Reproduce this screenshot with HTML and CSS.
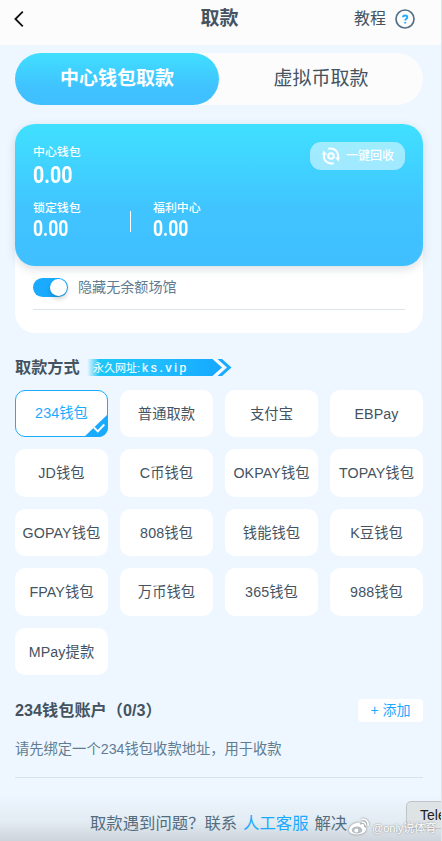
FILE: index.html
```html
<!DOCTYPE html>
<html lang="zh-CN">
<head>
<meta charset="utf-8">
<title>取款</title>
<link rel="stylesheet" href="styles.css">
</head>
<body>
<div class="page">
  <header class="topbar">
    <svg class="back" viewBox="0 0 10 18"><path d="M8.8 1.600 1.400 9l7.400 7.400"/></svg>
    <h1>取款</h1>
    <div class="help"><span>教程</span>
      <svg viewBox="0 0 20 20"><circle cx="10" cy="10" r="9"/><path d="M8 8.300c0-2.500 4.300-2.400 4.300-.1 0 1.500-2.100 1.500-2.100 3.200M10.200 13v1.500"/></svg>
    </div>
  </header>
  <main>
    <nav class="tabs"><span class="tab active">中心钱包取款</span><span class="tab">虚拟币取款</span></nav>
    <section class="wallet">
      <div class="balance">
        <div class="label">中心钱包</div>
        <div class="amount">0.00</div>
        <div class="sub">
          <div class="cell"><div class="label">锁定钱包</div><div class="amount small">0.00</div></div>
          <i class="bar"></i>
          <div class="cell"><div class="label">福利中心</div><div class="amount small">0.00</div></div>
        </div>
        <div class="recycle">
          <svg viewBox="0 0 18 18"><circle cx="9" cy="9" r="2.800"/><path d="M6.200 1.900A7.400 7.400 0 0 1 15.800 11M11.800 16.100A7.400 7.400 0 0 1 2.200 7"/><path class="solid" d="m12.900 10.600 4.900-.4-1.200 4.400ZM5.100 7.400l-4.900.4 1.200-4.400Z"/></svg>
          <span>一键回收</span>
        </div>
      </div>
      <div class="hide"><i class="switch"></i><span>隐藏无余额场馆</span></div>
    </section>
    <div class="method">
      <h2>取款方式</h2>
      <div class="ribbon">
        <svg viewBox="0 0 145 17"><defs><linearGradient id="rg"><stop offset="0" stop-color="#1cc7f7" stop-opacity="0"/><stop offset=".09" stop-color="#1cc7f7"/><stop offset=".5" stop-color="#20bdff"/><stop offset="1" stop-color="#16a8ff"/></linearGradient></defs><path fill="url(#rg)" d="M0 0h125.500l9.500 8.500-9.500 8.500H0Z"/><path fill="#18aaff" d="M130.500 0h4.500l9.500 8.500L135 17h-4.500l9.500-8.500Z"/><path class="edge" d="m127 0 9.500 8.500-9.500 8.500"/></svg>
        <span class="site">永久网址:</span><span class="host">ks.vip</span>
      </div>
    </div>
    <div class="grid">
      <div class="tile selected">234钱包<svg viewBox="0 0 24 23"><path class="corner" d="M24 0v13c0 6-4 10-10 10H0Z"/><path class="tick" d="m10 13.500 3.800 3.800 6.500-6.800"/></svg></div>
      <div class="tile">普通取款</div><div class="tile">支付宝</div><div class="tile">EBPay</div>
      <div class="tile">JD钱包</div><div class="tile">C币钱包</div><div class="tile">OKPAY钱包</div><div class="tile">TOPAY钱包</div>
      <div class="tile">GOPAY钱包</div><div class="tile">808钱包</div><div class="tile">钱能钱包</div><div class="tile">K豆钱包</div>
      <div class="tile">FPAY钱包</div><div class="tile">万币钱包</div><div class="tile">365钱包</div><div class="tile">988钱包</div>
      <div class="tile">MPay提款</div>
    </div>
    <div class="account"><h2>234钱包账户（0/3）</h2><span class="add">+ 添加</span></div>
    <p class="hint">请先绑定一个234钱包收款地址，用于收款</p>
  </main>
  <footer><span>取款遇到问题？联系</span><b>人工客服</b><span>解决</span></footer>
  <div class="tele">Tele</div>
  <div class="mark">
    <svg viewBox="0 0 20 18"><path d="M7.500 5C4 5 0 9 0 12c0 6 15 6 17 0 .7-2-1-3-2-3.200.8-3-1-3.500-4-2.300C11.300 4.500 9.500 4.200 7.500 5Z"/><ellipse class="eye" cx="8" cy="12" rx="5.300" ry="3.600"/><circle cx="7.300" cy="12.400" r="2"/><path class="wave" d="M13 4.300c2-.5 4 1 3.500 3.200M12.600 1.500c4-1 7.500 2.500 6.300 6.500"/></svg>
    <span>@only说体育</span>
  </div>
</div>
</body>
</html>
```
FILE: styles.css
```css
* { box-sizing: border-box; }
body {
  margin: 0;
  font-family: "Liberation Sans", "Noto Sans CJK SC", sans-serif;
  color: #44535f;
}
h1, h2, p { margin: 0; }
.page {
  position: relative;
  width: 442px;
  height: 841px;
  overflow: hidden;
  background: #eef7ff;
  border-right: 1px solid #dfe5ea;
}
.topbar {
  height: 45px;
  padding: 0 26px 7px 14px;
  display: grid;
  grid-template-columns: 1fr auto 1fr;
  align-items: center;
  background: #fcfcfc;
}
.back { width: 10px; height: 18px; fill: none; stroke: #111; stroke-width: 1.8; }
.topbar h1 { font-size: 19px; line-height: 28px; position: relative; left: 5px; }
.help { display: flex; justify-content: flex-end; align-items: center; gap: 9px; font-size: 16px; line-height: 24px; }
.help svg { width: 20px; height: 20px; fill: none; stroke: #557086; stroke-width: 1.7; }
.help path { stroke: #1aaeff; stroke-width: 1.9; }
.help span { margin-top: -1px; }
main { padding: 8px 18px 0 15px; }
.tabs {
  display: flex;
  height: 52px;
  border-radius: 26px;
  background: #fcfcfc;
}
.tab { flex: 1; border-radius: 26px; text-align: center; font-size: 19px; line-height: 52px; }
.tab.active { color: #fff; font-weight: 700; background: linear-gradient(#40dfff, #40c3ff 65%, #40bfff); }
.wallet {
  margin-top: 19px;
  height: 209px;
  border-radius: 20px;
  background: #fff;
}
.balance {
  position: relative;
  height: 142px;
  padding: 19px 18px 0;
  border-radius: 20px;
  color: #fff;
  background: linear-gradient(#40e0ff, #40c4ff 60%, #40bfff);
  box-shadow: 0 3px 10px rgba(70, 90, 110, .2);
}
.label { font-size: 11.900px; line-height: 19px; font-weight: 500; }
.amount {
  font-family: Roboto, sans-serif;
  font-weight: 700;
  font-size: 24.500px;
  line-height: 25px;
  padding-bottom: 2px;
  transform: scaleX(.8);
  transform-origin: left;
}
.amount.small { font-size: 22px; line-height: 22px; }
.sub { display: flex; margin-top: 10px; }
.sub .cell { width: 97px; }
.bar { width: 1px; height: 21px; margin: 12px 22px 0 0; background: #fff; }
.sub .bar + .cell { width: auto; }
.recycle {
  position: absolute;
  right: 18px;
  top: 18px;
  width: 95px;
  height: 28px;
  border-radius: 11px;
  display: flex;
  align-items: center;
  gap: 6px;
  padding-left: 12px;
  font-size: 12px;
  line-height: 28px;
  font-weight: 500;
  background: rgba(255, 255, 255, .5);
}
.recycle span { height: 28px; }
.recycle svg { width: 18px; height: 18px; fill: none; stroke: #fff; stroke-width: 2; }
.recycle .solid { fill: #fff; stroke: none; }
.hide {
  display: flex;
  align-items: center;
  gap: 10px;
  height: 44px;
  margin: 0 18px;
  border-bottom: 1px solid #dce6ea;
  color: #617c91;
  font-size: 14.100px;
}
.hide span { height: 24px; line-height: 22px; }
.switch {
  width: 35px;
  height: 19px;
  border-radius: 10px;
  background: #1aaaff;
  display: flex;
  justify-content: flex-end;
  padding: 1px;
}
.switch::after { content: ""; width: 17px; height: 17px; border-radius: 50%; background: #fff; box-shadow: 0 3px 5px rgba(0, 0, 0, .2); }
.method { display: flex; align-items: center; margin-top: 22px; height: 25px; }
.method h2 { font-size: 16.200px; line-height: 24px; height: 26px; width: 72px; white-space: nowrap; }
.ribbon {
  width: 145px;
  height: 17px;
  display: grid;
  grid-template-columns: 49px 1fr;
  align-items: center;
  padding-left: 6px;
  color: #fff;
  position: relative;
}
.ribbon svg { position: absolute; inset: 0; width: 145px; height: 17px; }
.ribbon .edge { fill: none; stroke: #fff; stroke-width: 1.500; }
.ribbon span { position: relative; line-height: 19px; white-space: nowrap; }
.site { font-size: 11px; }
.host { font-size: 12px; letter-spacing: 2.700px; -webkit-text-stroke: .2px #fff; }
.grid {
  display: grid;
  grid-template-columns: repeat(4, 93px);
  grid-auto-rows: 47.450px;
  gap: 12px;
  margin-top: 10px;
}
.tile {
  position: relative;
  border-radius: 10px;
  background: #fff;
  font-size: 14.250px;
  letter-spacing: .1px;
  line-height: 48px;
  text-align: center;
  white-space: nowrap;
}
.tile.selected { border: 1px solid #1aaaff; color: #1aaaff; line-height: 45px; }
.tile svg { position: absolute; right: -1px; bottom: -1px; width: 24px; height: 23px; }
.corner { fill: #1aaaff; }
.tick { fill: none; stroke: #fff; stroke-width: 1.900; }
.account { display: flex; justify-content: space-between; align-items: center; margin-top: 23.250px; height: 24px; }
.account h2 { font-size: 16.200px; line-height: 24px; font-weight: 700; }
.add {
  width: 65px;
  height: 23px;
  border-radius: 4px;
  background: #fff;
  color: #1aaaff;
  font-size: 14px;
  line-height: 22px;
  text-align: center;
}
.hint {
  margin-top: 17px;
  height: 39px;
  border-bottom: 1px solid #d5e4e9;
  font-size: 14.250px;
  letter-spacing: .03px;
  line-height: 20px;
  color: #617c91;
}
footer {
  height: 63px;
  padding: 32px 0 0 90px;
  display: flex;
  gap: 6px;
  font-size: 16.350px;
  line-height: 26px;
  color: #536d80;
  white-space: nowrap;
  background: linear-gradient(rgba(205, 212, 219, 0) 25%, rgba(205, 212, 219, .35) 70%, #cdd4db);
}
footer b { font-weight: 400; color: #1aaaff; }
.tele {
  position: absolute;
  left: 406px;
  top: 801px;
  width: 50px;
  height: 28px;
  padding-left: 13px;
  border: 1px solid #bfc4c8;
  border-radius: 5px;
  background: #dee3e6;
  color: #222;
  font-size: 14px;
  line-height: 27px;
}
.mark {
  position: absolute;
  left: 349px;
  top: 818px;
  display: flex;
  align-items: center;
  gap: 3px;
  height: 17px;
  color: #fff;
  font-size: 11px;
  text-shadow: 0 0 2px #777;
  white-space: nowrap;
}
.mark svg { width: 20px; height: 18px; fill: #fff; filter: drop-shadow(0 0 1px #777); }
.mark .eye { fill: #b5bcc2; }
.mark .wave { fill: none; stroke: #fff; stroke-width: 1.500; }
```
